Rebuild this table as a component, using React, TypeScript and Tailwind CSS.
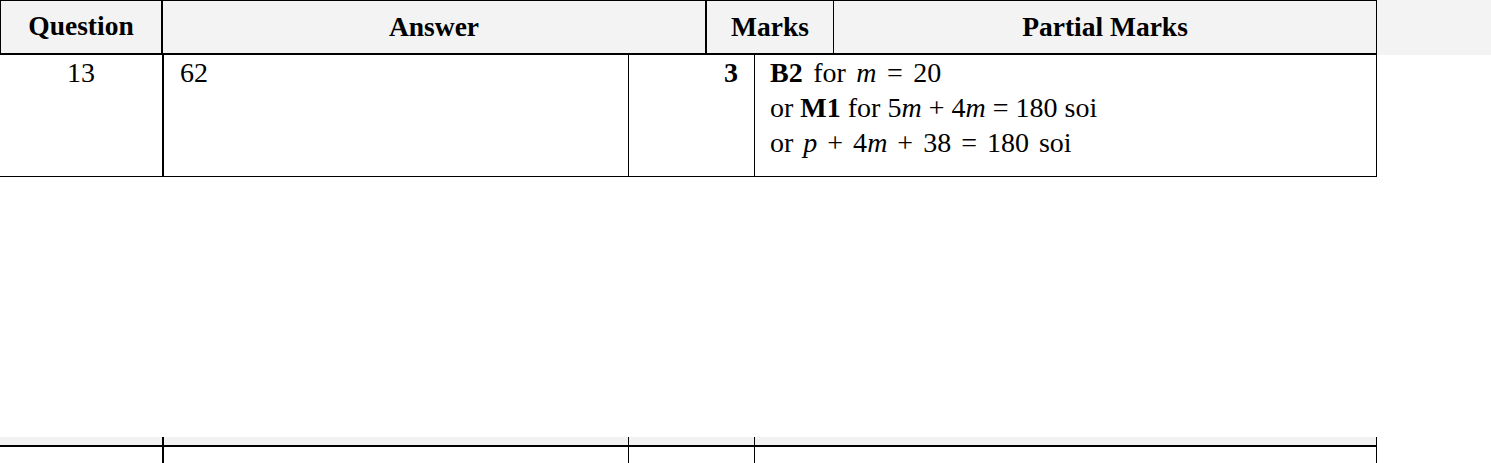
const serif = "font-['Liberation_Serif','Times_New_Roman',serif]";

function HeaderRow() {
  return (
    <div className="flex h-[55px] w-full bg-[#f3f3f3]">
      <div className="flex w-[1377px] border-t border-b-2 border-black text-[27.5px] font-bold leading-none">
        <div className="flex w-[163px] items-center justify-center border-l border-r-2 border-black pb-[3px]">
          Question
        </div>
        <div className="flex w-[544px] items-center justify-center border-r-2 border-black">Answer</div>
        <div className="flex w-[127px] items-center justify-center border-r border-black">Marks</div>
        <div className="flex w-[543px] items-center justify-center border-r border-black">Partial Marks</div>
      </div>
    </div>
  );
}

function BodyRow() {
  return (
    <div className="flex h-[122px] w-[1377px] border-b border-black text-[28px] leading-[35px]">
      <div className="w-[164px] border-r-2 border-black text-center">13</div>
      <div className="w-[465px] border-r border-black pl-[16px]">62</div>
      <div className="w-[126px] border-r border-black pr-[16px] text-right font-bold">3</div>
      <div className="w-[622px] border-r border-black pl-[15px]">
        <div className="[word-spacing:3.5px]">
          <b>B2</b> for <i>m</i> = 20
        </div>
        <div>
          or <b>M1</b> for 5<i>m</i> + 4<i>m</i> = 180 soi
        </div>
        <div className="[word-spacing:3px]">
          or <i>p</i> + 4<i>m</i> + 38 = 180 soi
        </div>
      </div>
    </div>
  );
}

function NextRowStub() {
  const cols = [
    "w-[164px] border-r-2",
    "w-[465px] border-r",
    "w-[126px] border-r",
    "w-[622px] border-r",
  ];
  return (
    <div className="flex h-[26px] w-[1377px]">
      {cols.map((c, i) => (
        <div key={i} className={`${c} border-black`}>
          <div className="h-[10px] border-b-2 border-black bg-[#f2f2f2]" />
        </div>
      ))}
    </div>
  );
}

export default function App() {
  return (
    <div className={`h-[463px] w-[1491px] overflow-hidden bg-white text-black ${serif}`}>
      <HeaderRow />
      <BodyRow />
      <div className="h-[260px]" />
      <NextRowStub />
    </div>
  );
}
